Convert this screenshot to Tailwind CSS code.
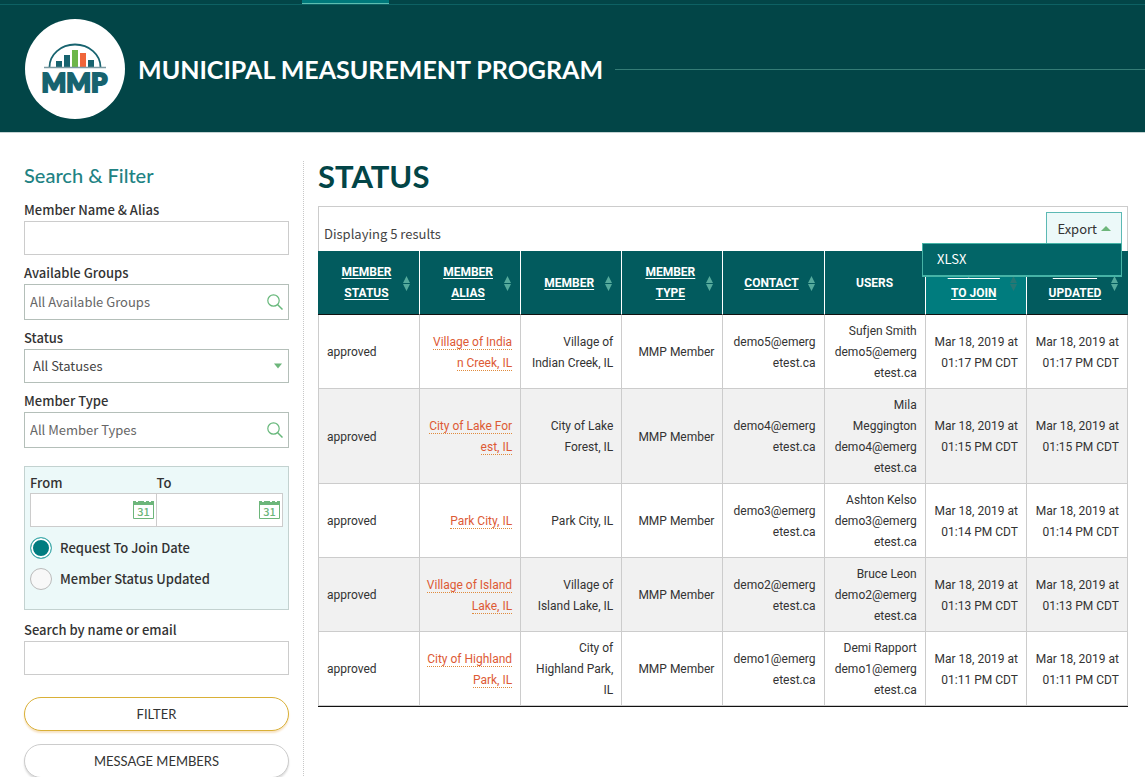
<!DOCTYPE html>
<html lang="en">

<head>
    <meta charset="UTF-8" />
    <meta name="viewport" content="width=device-width, initial-scale=1.0" />
    <script src="https://cdn.jsdelivr.net/npm/@tailwindcss/browser@4"></script>
    <title>Municipal Measurement Program - Status</title>
</head>

<body class="bg-white text-[#333] font-['Noto_Sans_CJK_SC',sans-serif] text-[13px] leading-[21px] overflow-x-hidden">
    <!-- Header -->
    <header class="bg-[#024547] border-b border-[#c5d3d3]">
        <nav class="h-[5px] border-b border-[#0d6163] pl-[302px]">
            <a href="#" aria-label="Members" class="block w-[87px] h-1 bg-[#00797b] border-b border-[#5dbdb0]"></a>
        </nav>
        <div class="flex items-center h-[127px] pt-px pl-[25px]">
            <a href="#" class="block shrink-0">
                <svg class="w-[100px] h-[100px]" viewBox="0 0 100 100" role="img" aria-label="MMP logo">
                    <circle cx="50" cy="50" r="50" fill="#fff" />
                    <path d="M24.500 48a25.500 22.500 0 0 1 51 0" fill="none" stroke="#17636f" stroke-width="1.800" />
                    <path d="M31 42h6v6h-6zM39 36h6v12h-6zM63 41h6v7h-6z" fill="#17636f" />
                    <path d="M47 31h6v17h-6z" fill="#6cb64a" />
                    <path d="M55 34h6v14h-6z" fill="#f0653a" />
                    <path d="M19 48.500h62" stroke="#7d9ba3" stroke-width="1.500" />
                    <text x="49.500" y="73" text-anchor="middle" font-family="Lato" font-weight="900" font-size="26" fill="#17636f" stroke="#17636f" stroke-width="2">MMP</text>
                </svg>
            </a>
            <span class="ml-[13px] text-[25px] leading-8 font-bold text-white font-[Lato,sans-serif] whitespace-nowrap">MUNICIPAL MEASUREMENT PROGRAM</span>
            <span class="flex-1 ml-3 h-px bg-[#357c76]"></span>
        </div>
    </header>

    <div class="flex pl-6 pr-[17px] pt-7">
        <!-- Search & Filter -->
        <aside class="w-[280px] shrink-0 pr-[14px] border-r border-dotted border-[#c8c8c8]">
            <h2 class="text-[20px] leading-7 mb-[10px] text-[#218283] font-medium font-[Lato,sans-serif]">Search &amp; Filter</h2>
            <form>
                <label for="memberName" class="block font-medium">Member Name &amp; Alias</label>
                <input id="memberName" type="text" class="block w-full h-[34px] mt-px border border-[#ccc] px-[5px]" />

                <label for="groups" class="block font-medium mt-[7px]">Available Groups</label>
                <div class="flex items-center h-9 mt-px border border-[#b4bfb9] px-[5px]">
                    <input id="groups" type="text" placeholder="All Available Groups" class="flex-1 min-w-0 pb-px outline-none placeholder:text-[#666]" />
                    <svg class="w-4 h-4" viewBox="0 0 16 16" fill="none" stroke="#67b87b" stroke-width="1.200">
                        <circle cx="6.500" cy="6.500" r="5.700" />
                        <path d="M10.500 10.500l5 5" stroke-width="1.500" />
                    </svg>
                </div>

                <label for="status" class="block font-medium mt-[7px]">Status</label>
                <div class="grid items-center mt-px">
                    <select id="status" class="col-start-1 row-start-1 w-full h-[34px] border border-[#b4bfb9] px-2 pb-px appearance-none text-[#444]">
                        <option>All Statuses</option>
                    </select>
                    <svg class="col-start-1 row-start-1 justify-self-end w-2 h-[6px] mr-[7px] pointer-events-none" viewBox="0 0 8 6" fill="#6db67b">
                        <path d="M0 .5h8L4 5.500z" />
                    </svg>
                </div>

                <label for="memberType" class="block font-medium mt-[7px]">Member Type</label>
                <div class="flex items-center h-9 mt-px border border-[#b4bfb9] px-[5px]">
                    <input id="memberType" type="text" placeholder="All Member Types" class="flex-1 min-w-0 pb-px outline-none placeholder:text-[#666]" />
                    <svg class="w-4 h-4" viewBox="0 0 16 16" fill="none" stroke="#67b87b" stroke-width="1.200">
                        <circle cx="6.500" cy="6.500" r="5.700" />
                        <path d="M10.500 10.500l5 5" stroke-width="1.500" />
                    </svg>
                </div>

                <!-- Date range -->
                <div class="mt-[18px] h-36 p-[5px] border border-[#c3d2d0] bg-[#ecf9f9] font-medium">
                    <div class="flex">
                        <div class="flex-1 min-w-0">
                            <label for="dateFrom" class="block">From</label>
                            <div class="flex items-center h-[34px] bg-white border border-[#ccc] pr-[2px]">
                                <input id="dateFrom" type="text" class="flex-1 min-w-0 outline-none" />
                                <svg class="shrink-0 w-[21px] h-[18px]" viewBox="0 0 21 18">
                                    <path d="M.5 1.500h20v16H.5z" fill="#fff" stroke="#6db67b" />
                                    <path d="M0 0h3v2h2V0h6v2h2V0h3v2h2V0h3v4H0z" fill="#6db67b" />
                                    <text x="10.500" y="15" text-anchor="middle" font-size="11" fill="#6db67b">31</text>
                                </svg>
                            </div>
                        </div>
                        <div class="flex-1 min-w-0">
                            <label for="dateTo" class="block">To</label>
                            <div class="flex items-center h-[34px] bg-white border border-l-0 border-[#ccc] pr-[2px]">
                                <input id="dateTo" type="text" class="flex-1 min-w-0 outline-none" />
                                <svg class="shrink-0 w-[21px] h-[18px]" viewBox="0 0 21 18">
                                    <path d="M.5 1.500h20v16H.5z" fill="#fff" stroke="#6db67b" />
                                    <path d="M0 0h3v2h2V0h6v2h2V0h3v2h2V0h3v4H0z" fill="#6db67b" />
                                    <text x="10.500" y="15" text-anchor="middle" font-size="11" fill="#6db67b">31</text>
                                </svg>
                            </div>
                        </div>
                    </div>
                    <div class="flex items-center gap-2 mt-[10px]">
                        <input id="byJoin" name="dateType" type="radio" checked
                            class="appearance-none w-[22px] h-[22px] rounded-full border border-[#bbb] bg-[#f8f8f8] checked:border-[#4cb3b3] checked:bg-[#007c80] checked:shadow-[inset_0_0_0_2px_#fff]" />
                        <label for="byJoin" class="pb-px">Request To Join Date</label>
                    </div>
                    <div class="flex items-center gap-2 mt-[9px]">
                        <input id="byUpdated" name="dateType" type="radio"
                            class="appearance-none w-[22px] h-[22px] rounded-full border border-[#bbb] bg-[#f8f8f8] checked:border-[#4cb3b3] checked:bg-[#007c80] checked:shadow-[inset_0_0_0_2px_#fff]" />
                        <label for="byUpdated" class="pb-px">Member Status Updated</label>
                    </div>
                </div>

                <label for="nameEmail" class="block font-medium mt-[9px]">Search by name or email</label>
                <input id="nameEmail" type="text" class="block w-full h-[34px] mt-px border border-[#ccc] px-[5px]" />

                <button type="submit" class="block w-full h-[34px] mt-[22px] rounded-full border border-[#d9b037] bg-white shadow-[0_2px_2px_#f7e3c4] font-[Lato,sans-serif]">FILTER</button>
                <button type="button" class="block w-full h-[34px] mt-[13px] rounded-full border border-[#ccc] bg-white shadow-[0_2px_2px_#ddd] font-[Lato,sans-serif]">MESSAGE MEMBERS</button>
            </form>
        </aside>

        <!-- Results -->
        <main class="flex-1 min-w-0 ml-[14px]">
            <h1 class="text-[31px] leading-[30px] mb-[15px] text-[#024547] font-bold font-[Lato,sans-serif]">STATUS</h1>

            <div class="flex items-start justify-between h-[45px] border border-b-0 border-[#ccc] pl-[5px] pr-[5px] pt-[5px]">
                <p class="mt-[11px] text-[#444]">Displaying 5 results</p>
                <div class="relative">
                    <button type="button" class="flex items-center gap-1 h-8 px-[10px] pb-px border border-b-0 border-[#5cb9b4] bg-[#ecf9f9]">
                        Export
                        <svg class="w-[10px] h-[5px]" viewBox="0 0 10 5" fill="#6db67b">
                            <path d="M0 5h10L5 0z" />
                        </svg>
                    </button>
                    <div class="absolute right-0 top-[31px] z-10 w-[200px] border border-b-2 border-[#46b3a6] bg-[#026567]">
                        <a href="#" class="block px-[14px] pt-1 pb-[6px] text-white">XLSX</a>
                    </div>
                </div>
            </div>

            <table class="w-full table-fixed border-separate border-spacing-0 border-b border-[#111] text-[12px] font-[Roboto,sans-serif] text-right">
                <thead class="bg-[#025b5e] text-white text-center">
                    <tr id="headRow"></tr>
                </thead>
                <tbody id="rows"></tbody>
            </table>
        </main>
    </div>

    <script>
        const columns = [
            ["MEMBER", "STATUS"], ["MEMBER", "ALIAS"], ["MEMBER"], ["MEMBER", "TYPE"],
            ["CONTACT"], ["USERS"], ["REQUEST", "TO JOIN"], ["STATUS", "UPDATED"]
        ];

        const members = [
            { alias: ["Village of India", "n Creek, IL"], member: ["Village of", "Indian Creek, IL"], demo: 5, user: ["Sufjen Smith"], time: "01:17" },
            { alias: ["City of Lake For", "est, IL"], member: ["City of Lake", "Forest, IL"], demo: 4, user: ["Mila", "Meggington"], time: "01:15" },
            { alias: ["Park City, IL"], member: ["Park City, IL"], demo: 3, user: ["Ashton Kelso"], time: "01:14" },
            { alias: ["Village of Island", "Lake, IL"], member: ["Village of", "Island Lake, IL"], demo: 2, user: ["Bruce Leon"], time: "01:13" },
            { alias: ["City of Highland", "Park, IL"], member: ["City of", "Highland Park,", "IL"], demo: 1, user: ["Demi Rapport"], time: "01:11" }
        ];

        document.getElementById("headRow").innerHTML = columns.map((col, i) => {
            const text = col.join("<br>");
            const active = i == 6;
            if (col[0] == "USERS") {
                return `<th class="h-16 pt-px border-r border-b border-r-white border-b-[#111] font-bold">${text}</th>`;
            }
            return `<th class="h-16 pt-px border-r border-b border-b-[#111] font-bold ${i == 0 ? "w-[102px]" : ""} ${i == 7 ? "border-r-[#025b5e]" : "border-r-white"} ${active ? "bg-[#007c7e]" : ""}">
                <div class="flex items-center pl-3 pr-[9px]">
                    <a href="#" class="flex-1 underline underline-offset-2">${text}</a>
                    <svg class="w-[7px] h-[15px]" viewBox="0 0 7 15" fill="${active ? "#277774" : "#55aa9c"}">
                        <path d="M0 7h7L3.500 0zM0 8h7L3.500 15z" />
                    </svg>
                </div>
            </th>`;
        }).join("");

        const cell = (lines, extra = "") =>
            `<td class="border-r border-b border-[#ccc] pt-[6px] pb-1 pr-2 whitespace-nowrap ${extra}">${lines.join("<br>")}</td>`;

        document.getElementById("rows").innerHTML = members.map(m => {
            const email = [`demo${m.demo}@emerg`, "etest.ca"];
            const date = ["Mar 18, 2019 at", `${m.time} PM CDT`];
            const link = `<a href="#" class="text-[#dd5a35] border-b border-dotted border-[#e08a3c]">${m.alias.join("<br>")}</a>`;
            return `<tr class="even:bg-[#f1f1f1]">
                ${cell(["approved"], "border-l pl-2 text-left")}
                ${cell([link])}
                ${cell(m.member)}
                ${cell(["MMP Member"])}
                ${cell(email)}
                ${cell([...m.user, ...email])}
                ${cell(date)}
                ${cell(date)}
            </tr>`;
        }).join("");
    </script>
</body>

</html>
